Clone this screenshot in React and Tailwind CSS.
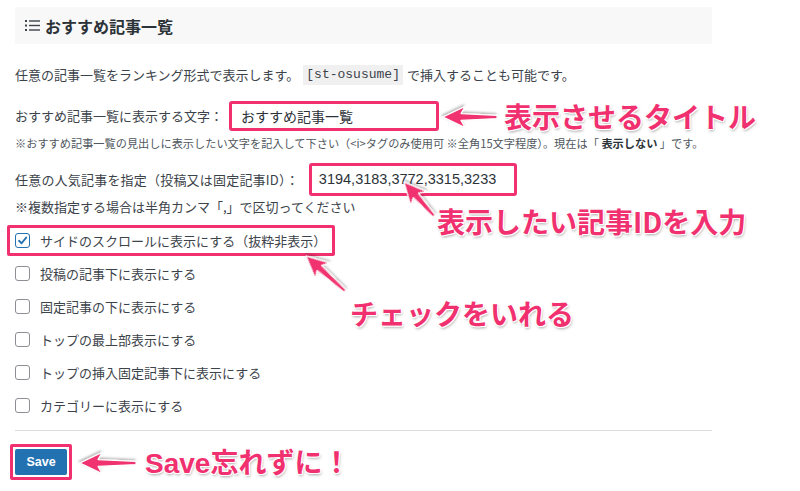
import React from 'react';

const JP = { fontFamily: '"Noto Sans CJK JP", "Noto Sans", sans-serif' };

// annotation arrow from (x1,y1) towards tip (x2,y2)
function Arrow({ x1, y1, x2, y2 }) {
  const len = Math.hypot(x2 - x1, y2 - y1);
  const ang = (Math.atan2(y2 - y1, x2 - x1) * 180) / Math.PI;
  return (
    <g transform={`translate(${x1} ${y1}) rotate(${ang})`}>
      <g filter="url(#ds)">
        <path
          d={`M0 -1.6 L${len - 18} -3.4 L${len - 22} -10.5 L${len} 0 L${len - 22} 10.5 L${len - 18} 3.4 L0 1.6 Z`}
          fill="#f0306f"
          stroke="#fff"
          strokeWidth="1.2"
          strokeLinejoin="round"
        />
      </g>
    </g>
  );
}

function Check({ checked }) {
  return (
    <span
      className={`w-[15px] h-[15px] rounded-[3px] flex items-center justify-center shrink-0 bg-white ${
        checked ? 'border-[1.5px] border-[#2271b1]' : 'border border-[#8c8f94]'
      }`}
    >
      {checked && (
        <svg width="11" height="11" viewBox="0 0 12 12">
          <path d="M2.2 6.3 L5 9 L10 2.8" fill="none" stroke="#2271b1" strokeWidth="2" strokeLinecap="round" strokeLinejoin="round" />
        </svg>
      )}
    </span>
  );
}

const options = [
  'サイドのスクロールに表示にする（抜粋非表示）',
  '投稿の記事下に表示にする',
  '固定記事の下に表示にする',
  'トップの最上部表示にする',
  'トップの挿入固定記事下に表示にする',
  'カテゴリーに表示にする',
];

const callout =
  'absolute text-[28px] font-bold text-[#f0306f] leading-none whitespace-nowrap [text-shadow:1px_1px_0_#fff,-1px_-1px_0_#fff,1px_-1px_0_#fff,-1px_1px_0_#fff,1px_2px_3px_rgba(0,0,0,0.35)]';

export default function App() {
  return (
    <div className="relative w-[800px] h-[491px] bg-white overflow-hidden text-[#3c434a]" style={JP}>
      <div className="w-[697px] ml-[15px] pt-[7px]">
        {/* Header */}
        <div className="h-[37px] bg-[#f8f8f8] flex items-center pl-[10px] gap-[5px]">
          <svg width="15" height="13" viewBox="0 0 15 13">
            <rect x="0" y="1" width="2" height="2" fill="#3c434a" />
            <rect x="0" y="5.5" width="2" height="2" fill="#3c434a" />
            <rect x="0" y="10" width="2" height="2" fill="#3c434a" />
            <rect x="4" y="1.3" width="11" height="1.4" fill="#3c434a" />
            <rect x="4" y="5.8" width="11" height="1.4" fill="#3c434a" />
            <rect x="4" y="10.3" width="11" height="1.4" fill="#3c434a" />
          </svg>
          <h2 className="text-[16px] font-bold text-[#2c3338]">おすすめ記事一覧</h2>
        </div>

        {/* Description */}
        <p className="mt-[21px] text-[13px] leading-[20px] flex items-center whitespace-nowrap">
          任意の記事一覧をランキング形式で表示します。
          <code className="mx-[4px] bg-[#f0f0f1] px-[3px] text-[13px] leading-[20px]" style={{ fontFamily: '"Liberation Mono", monospace' }}>
            [st-osusume]
          </code>
          で挿入することも可能です。
        </p>

        {/* Title field */}
        <div className="mt-[16px] flex items-center gap-[6px]">
          <label className="text-[13px] whitespace-nowrap">おすすめ記事一覧に表示する文字：</label>
          <div className="w-[210px] h-[30px] border-[3px] border-[#f0306f] rounded-[3px] flex items-center pl-[9px] text-[14px] text-[#2c3338]">
            おすすめ記事一覧
          </div>
        </div>
        <p className="mt-[5px] text-[11.2px] leading-[14px] text-[#50575e] whitespace-nowrap">
          ※おすすめ記事一覧の見出しに表示したい文字を記入して下さい（&lt;i&gt;タグのみ使用可 ※全角15文字程度）。現在は「 <b className="text-[#2c3338]">表示しない</b> 」です。
        </p>

        {/* ID field */}
        <div className="mt-[13px] flex items-center gap-[10px]">
          <label className="text-[13px] whitespace-nowrap tracking-[0.2px]">任意の人気記事を指定（投稿又は固定記事ID）：</label>
          <div
            className="w-[208px] h-[33px] border-[3px] border-[#f0306f] rounded-[3px] flex items-center pl-[7px] text-[14.5px] text-[#2c3338]"
            style={{ fontFamily: '"Liberation Sans", Arial, sans-serif' }}
          >
            3194,3183,3772,3315,3233
          </div>
        </div>
        <p className="mt-[2px] text-[13px] leading-[18px] whitespace-nowrap">※複数指定する場合は半角カンマ「,」で区切ってください</p>

        {/* Options */}
        <div className="mt-[8px] flex flex-col">
          {options.map((o, i) => (
            <div key={o} className="h-[33px] flex items-center">
              {i === 0 ? (
                <div className="ml-[-8px] h-[31px] border-[3px] border-[#f0306f] rounded-[2px] flex items-center gap-[10px] pl-[5px] pr-[6px]">
                  <Check checked />
                  <span className="text-[13px] whitespace-nowrap">{o}</span>
                </div>
              ) : (
                <div className="flex items-center gap-[10px]">
                  <Check />
                  <span className="text-[13px] whitespace-nowrap">{o}</span>
                </div>
              )}
            </div>
          ))}
        </div>

        <hr className="mt-[8px] border-t border-[#dcdcde]" />

        <div className="mt-[13px] ml-[-5px] inline-flex border-[3px] border-[#f0306f] rounded-[2px] p-[2px]">
          <button
            className="w-[52px] h-[26px] bg-[#2271b1] text-white text-[12.5px] font-semibold rounded-[2px]"
            style={{ fontFamily: '"Liberation Sans", Arial, sans-serif' }}
          >
            Save
          </button>
        </div>
      </div>

      {/* Annotations */}
      <svg className="absolute left-0 top-0 pointer-events-none" width="800" height="491">
        <defs>
          <filter id="ds" x="-20%" y="-50%" width="140%" height="200%">
            <feDropShadow dx="1" dy="1.5" stdDeviation="1.2" floodColor="#000" floodOpacity="0.3" />
          </filter>
        </defs>
        <Arrow x1={497} y1={117} x2={443} y2={117} />
        <Arrow x1={434} y1={216} x2={404} y2={182} />
        <Arrow x1={345} y1={291} x2={306} y2={256} />
        <Arrow x1={136} y1={463} x2={80} y2={463} />
      </svg>
      <div className={`${callout} left-[504px] top-[102px]`}>表示させるタイトル</div>
      <div className={`${callout} left-[437px] top-[207px]`}>表示したい記事IDを入力</div>
      <div className={`${callout} left-[350px] top-[299px]`}>チェックをいれる</div>
      <div className={`${callout} left-[145px] top-[447px]`}>
        <span style={{ fontFamily: '"Liberation Sans", Arial, sans-serif' }}>Save</span>忘れずに！
      </div>
    </div>
  );
}
